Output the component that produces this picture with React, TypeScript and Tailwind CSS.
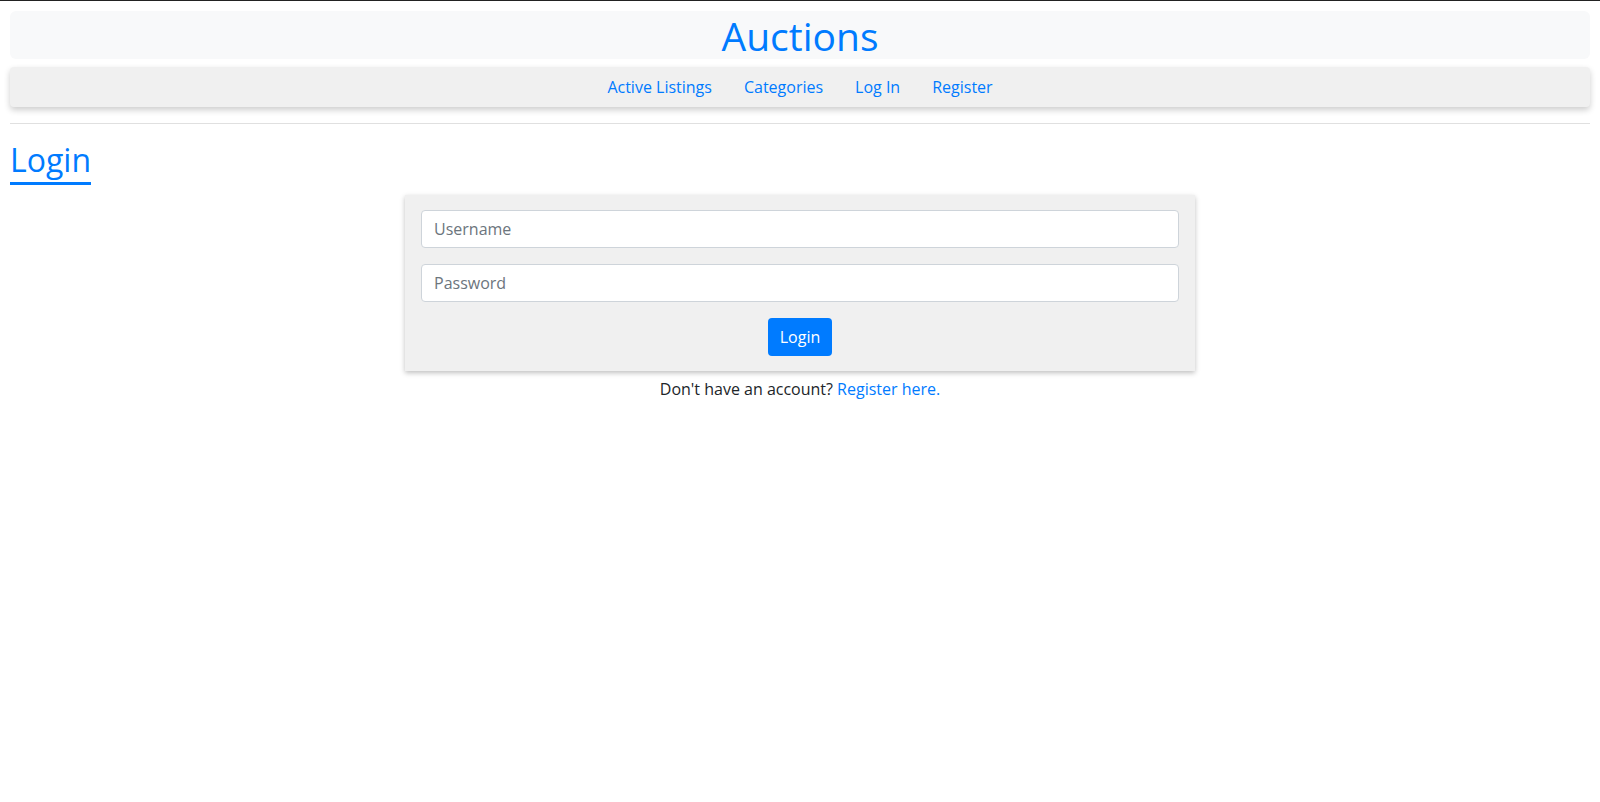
export default function App() {
  return (
    <div className="min-h-screen bg-white border-t border-[#222] px-[10px] pt-[10px] font-['Open_Sans',sans-serif] text-[#212529]">
      <div className="bg-[#f8f9fa] rounded-md h-[48px] flex items-center justify-center">
        <h1 className="text-[39px] leading-none text-[#007bff]">Auctions</h1>
      </div>
      <nav className="mt-[8px] bg-[#f0f0f0] h-[40px] flex items-center justify-center gap-8 rounded-sm shadow-[0_3px_6px_rgba(0,0,0,0.2)] text-[16px] text-[#007bff]">
        <a href="#">Active Listings</a>
        <a href="#">Categories</a>
        <a href="#">Log In</a>
        <a href="#">Register</a>
      </nav>
      <hr className="mt-[16px] border-t border-[#e0e0e0]" />
      <div className="mt-[16px]">
        <h2 className="inline-block text-[32px] leading-[40px] pb-[2px] text-[#007bff] border-b-[3px] border-[#007bff]">
          Login
        </h2>
      </div>
      <div className="w-1/2 mx-auto mt-[10px] bg-[#f0f0f0] shadow-[0_2px_5px_rgba(0,0,0,0.25)] px-4 pt-[15px] pb-[15px]">
        <input
          className="block w-full h-[38px] px-3 bg-white border border-[#ced4da] rounded text-[16px] placeholder:text-[#6c757d]"
          placeholder="Username"
        />
        <input
          type="password"
          className="block w-full h-[38px] px-3 mt-[16px] bg-white border border-[#ced4da] rounded text-[16px] placeholder:text-[#6c757d]"
          placeholder="Password"
        />
        <div className="flex justify-center mt-[16px]">
          <button className="h-[38px] px-3 bg-[#007bff] text-white rounded text-[16px]">Login</button>
        </div>
      </div>
      <p className="text-center mt-[6px] text-[16px]">
        Don't have an account? <a href="#" className="text-[#007bff]">Register here.</a>
      </p>
    </div>
  )
}
